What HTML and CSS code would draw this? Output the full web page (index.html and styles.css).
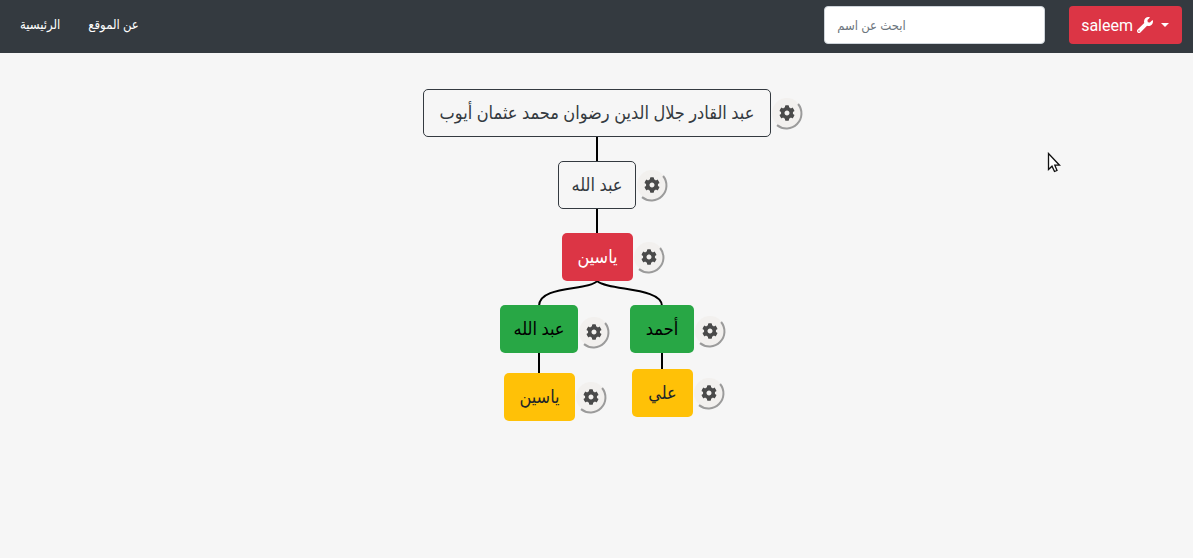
FILE: index.html
```
<!DOCTYPE html>
<html lang="ar">
<head>
<meta charset="utf-8">
<title>شجرة العائلة</title>
<link rel="stylesheet" href="styles.css">
</head>
<body>
<svg width="0" height="0" class="defs" aria-hidden="true">
  <symbol id="gear" viewBox="0 0 33 33">
    <circle cx="16" cy="15" r="15" fill="#f2f0ee"/>
    <path d="M27.100 6A15 15 0 0 1 6 27.100" fill="none" stroke="#9b9b9b" stroke-width="2"/>
    <g transform="translate(8 7) scale(.03125)"><path fill="#4a4a4a" d="M487.4 315.7l-42.6-24.6c4.3-23.2 4.3-47 0-70.2l42.6-24.6c4.900-2.800 7.100-8.600 5.500-14-11.100-35.600-30-67.800-54.700-94.600-3.800-4.100-10-5.100-14.800-2.300L380.800 110c-17.900-15.400-38.500-27.300-60.800-35.100V25.800c0-5.600-3.900-10.500-9.400-11.700-36.700-8.200-74.300-7.800-109.200 0-5.500 1.200-9.400 6.100-9.400 11.700V75c-22.200 7.900-42.800 19.800-60.800 35.100L88.700 85.500c-4.900-2.800-11-1.900-14.800 2.300-24.700 26.700-43.600 58.900-54.700 94.600-1.700 5.400.6 11.200 5.500 14L67.300 221c-4.300 23.200-4.300 47 0 70.200l-42.600 24.600c-4.900 2.800-7.100 8.600-5.500 14 11.100 35.600 30 67.800 54.700 94.600 3.800 4.100 10 5.100 14.800 2.300l42.600-24.600c17.900 15.400 38.500 27.300 60.800 35.100v49.200c0 5.600 3.900 10.500 9.400 11.700 36.700 8.200 74.300 7.800 109.200 0 5.500-1.200 9.400-6.100 9.400-11.700v-49.200c22.200-7.900 42.800-19.800 60.800-35.100l42.600 24.600c4.900 2.800 11 1.900 14.800-2.300 24.700-26.700 43.600-58.900 54.700-94.600 1.500-5.500-.7-11.300-5.600-14.100zM256 336c-44.100 0-80-35.900-80-80s35.900-80 80-80 80 35.900 80 80-35.900 80-80 80z"/></g>
  </symbol>
</svg>

<header class="navbar">
  <nav class="links">
    <a href="#">الرئيسية</a>
    <a href="#">عن الموقع</a>
  </nav>
  <input class="search" type="text" placeholder="ابحث عن اسم" aria-label="ابحث عن اسم">
  <button class="user" type="button">
    <span>saleem</span>
    <svg class="wrench" viewBox="0 0 512 512" aria-hidden="true"><path fill="currentColor" d="M507.700 109.100c-2.200-9-13.500-12.100-20.100-5.500l-74.400 74.400-67.900-11.300L334 98.900l74.400-74.400c6.600-6.600 3.400-17.900-5.700-20.200-47.400-11.700-99.600.9-136.600 37.900-39.600 39.600-50.500 97.100-34.100 147.200L18.700 402.800c-25 25-25 65.500 0 90.500 25 25 65.500 25 90.500 0l213.200-213.200c50.100 16.700 107.500 5.700 147.400-34.200 37.100-37.100 49.700-89.300 37.900-136.800zM64 472c-13.200 0-24-10.800-24-24 0-13.300 10.700-24 24-24s24 10.700 24 24c0 13.200-10.700 24-24 24z"/></svg>
    <span class="caret"></span>
  </button>
</header>

<main class="tree">
  <svg class="lines" viewBox="0 0 413 400" aria-hidden="true">
    <path d="M207 83V108M207 155V180M149 299V321M272 299V317"/>
    <path d="M207 228C199 238 149 232 149 253M207 228C218 238 272 234 272 253"/>
  </svg>
  <button type="button" class="node outline n1">عبد القادر جلال الدين رضوان محمد عثمان أيوب</button>
  <button type="button" class="gear g1" aria-label="إعدادات"><svg><use href="#gear"/></svg></button>
  <button type="button" class="node outline n2">عبد الله</button>
  <button type="button" class="gear g2" aria-label="إعدادات"><svg><use href="#gear"/></svg></button>
  <button type="button" class="node red n3">ياسين</button>
  <button type="button" class="gear g3" aria-label="إعدادات"><svg><use href="#gear"/></svg></button>
  <button type="button" class="node green n4">عبد الله</button>
  <button type="button" class="gear g4" aria-label="إعدادات"><svg><use href="#gear"/></svg></button>
  <button type="button" class="node green n5">أحمد</button>
  <button type="button" class="gear g5" aria-label="إعدادات"><svg><use href="#gear"/></svg></button>
  <button type="button" class="node yellow n6">ياسين</button>
  <button type="button" class="gear g6" aria-label="إعدادات"><svg><use href="#gear"/></svg></button>
  <button type="button" class="node yellow n7">علي</button>
  <button type="button" class="gear g7" aria-label="إعدادات"><svg><use href="#gear"/></svg></button>
</main>

<svg class="pointer" viewBox="0 0 14 22" aria-hidden="true"><path d="M1.500 1.500V17.500L5 14.200L7.500 19.500L10 18.500L7.800 13.200H12.500Z" fill="#fff" stroke="#111" stroke-width="1.300"/></svg>
</body>
</html>
```

FILE: styles.css
```
* { box-sizing: border-box; }

body {
  margin: 0;
  background: #f6f6f6;
  color: #212529;
  font-family: Roboto, "DejaVu Sans Condensed", "DejaVu Sans", sans-serif;
}

button, input { font-family: inherit; }

.defs { position: absolute; }

.navbar {
  display: flex;
  align-items: center;
  min-height: 53px;
  padding: 6px 11px 9px 20px;
  background: #343a40;
}

.links {
  display: flex;
  gap: 28px;
  margin-right: auto;
}

.links a {
  color: #fff;
  font-size: 13px;
  line-height: 24px;
  text-decoration: none;
  direction: rtl;
}

.search {
  width: 221px;
  height: 38px;
  margin-right: 24px;
  padding: 6px 12px;
  border: 1px solid #ced4da;
  border-radius: 4px;
  background: #fff;
  font-size: 13px;
}

.search::placeholder { color: #6c757d; opacity: 1; }

.user {
  display: flex;
  align-items: center;
  height: 38px;
  padding: 0 13px 0 12px;
  border: 0;
  border-radius: 4px;
  background: #dc3545;
  color: #fff;
  font-size: 16px;
}

.wrench {
  width: 16px;
  height: 16px;
  margin: 0 8px 0 4px;
}

.caret {
  border: 4px solid transparent;
  border-top-color: #fff;
  border-bottom: 0;
}

.tree {
  position: relative;
  width: 413px;
  height: 400px;
  margin: 0 auto;
}

.lines {
  position: absolute;
  inset: 0;
  width: 413px;
  height: 400px;
  fill: none;
  stroke: #000;
  stroke-width: 2;
}

.node {
  position: absolute;
  height: 48px;
  padding: 0;
  border: 1px solid transparent;
  border-radius: 5px;
  font-size: 18px;
  line-height: 30px;
  white-space: nowrap;
  direction: rtl;
}

.outline { border-color: #343a40; background: #f6f6f6; color: #343a40; }
.red { background: #dc3545; color: #fff; }
.green { background: #28a745; color: #000; }
.yellow { background: #ffc107; color: #212529; }

.n1 { left: 33px; top: 36px; width: 348px; }
.n2 { left: 168px; top: 108px; width: 78px; }
.n3 { left: 172px; top: 180px; width: 71px; }
.n4 { left: 110px; top: 252px; width: 78px; }
.n5 { left: 240px; top: 252px; width: 64px; }
.n6 { left: 114px; top: 320px; width: 71px; }
.n7 { left: 242px; top: 316px; width: 61px; }

.gear {
  position: absolute;
  width: 33px;
  height: 33px;
  padding: 0;
  border: 0;
  background: none;
}

.gear svg { display: block; width: 33px; height: 33px; }

.g1 { left: 381px; top: 45px; }
.g2 { left: 246px; top: 117px; }
.g3 { left: 243px; top: 189px; }
.g4 { left: 188px; top: 264px; }
.g5 { left: 304px; top: 263px; }
.g6 { left: 185px; top: 329px; }
.g7 { left: 303px; top: 325px; }

.pointer {
  position: absolute;
  left: 1047px;
  top: 152px;
  width: 14px;
  height: 22px;
}
```
